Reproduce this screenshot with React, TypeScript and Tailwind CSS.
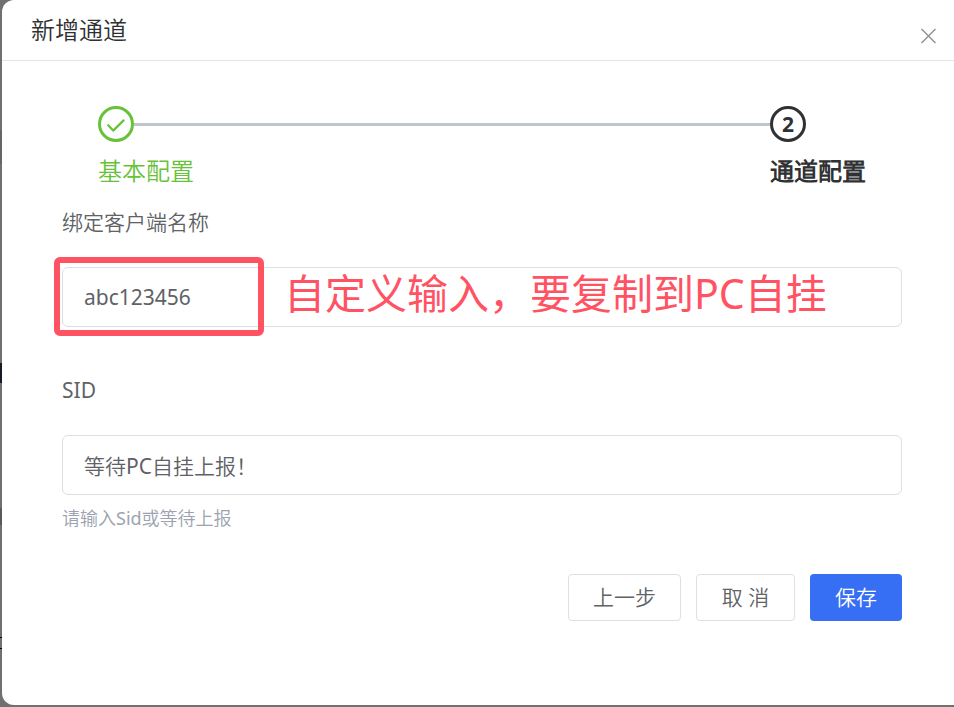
import { useState } from 'react'
import type { ReactNode } from 'react'

interface FieldProps {
  id:        string
  label:     string
  value:     string
  onChange:  (value: string) => void
  hint?:     string
  children?: ReactNode
}

function Field({ id, label, value, onChange, hint, children }: FieldProps) {
  return (
    <div>
      <label htmlFor={id} className="block text-[21px] leading-[30px] text-[#606266]">{label}</label>
      <div className="relative mt-[30px]">
        <input
          id={id}
          type="text"
          value={value}
          onChange={e => onChange(e.target.value)}
          className="block h-[60px] w-full rounded-md border border-[#dcdfe6] bg-white px-[21px] text-[21px] text-[#606266] outline-none focus:border-[#366ef4]"
        />
        {children}
      </div>
      {hint && <p className="mt-[11px] text-[18px] leading-6 text-[#9ca3b0]">{hint}</p>}
    </div>
  )
}

function Steps() {
  return (
    <ol className="flex pt-[45px] pr-[88px] pl-24 text-[24px]">
      <li className="flex-1 text-[#67c23a]">
        <div className="flex items-center">
          <span className="flex size-9 items-center justify-center rounded-full border-3 border-[#67c23a]">
            <svg width="20" height="20" viewBox="0 0 20 20" fill="none" stroke="currentColor" strokeWidth="2.2" strokeLinecap="round" strokeLinejoin="round">
              <path d="M2.2 11.2 7.2 16.6 17.6 6.4" />
            </svg>
          </span>
          <span className="h-[3px] flex-1 bg-[#c0c4cc]" />
        </div>
        <div className="mt-[11px] leading-9">基本配置</div>
      </li>
      <li className="font-bold text-[#303133]" aria-current="step">
        <span className="flex size-9 items-center justify-center rounded-full border-3 border-[#303133] text-[21px] leading-none">2</span>
        <div className="mt-[11px] leading-9">通道配置</div>
      </li>
    </ol>
  )
}

// Sliver of the dimmed page left of the dialog
function Backdrop() {
  return (
    <div className="flex w-[2px] shrink-0 flex-col" aria-hidden="true">
      <div className="h-[130px]" />
      <div className="h-[34px] bg-[#666669]" />
      <div className="h-[199px]" />
      <div className="h-5 bg-[#161b26]" />
      <div className="h-[125px]" />
      <div className="h-[17px] bg-[#58595d]" />
      <div className="h-[112px]" />
      <div className="h-[12px] border-y border-black" />
    </div>
  )
}

export default function App() {
  const [clientName, setClientName] = useState('abc123456')
  const [sid, setSid] = useState('等待PC自挂上报！')

  const plainButton = 'h-[47px] min-w-[99px] rounded border border-[#dcdfe6] bg-white px-6 text-[21px] text-[#606266]'

  return (
    <div className="flex min-h-screen items-start bg-[#707070] pb-[2px] font-['Noto_Sans','Noto_Sans_CJK_SC_DemiLight','Noto_Sans_CJK_SC',sans-serif]">
      <Backdrop />
      <section role="dialog" aria-labelledby="dialog-title" className="min-w-0 flex-1 rounded-l-xl bg-white">
        <header className="flex h-[61px] items-center justify-between border-b border-[#e4e4e4] pr-4 pl-[29px]">
          <h1 id="dialog-title" className="text-[24px] leading-9 text-[#303133]">新增通道</h1>
          <button type="button" aria-label="关闭" className="mt-3 text-[#909399]">
            <svg width="19" height="19" viewBox="0 0 19 19" fill="none" stroke="currentColor" strokeWidth="1.5">
              <path d="M2.5 2 16.5 16M16.5 2 2.5 16" />
            </svg>
          </button>
        </header>

        <Steps />

        <form className="pt-[18px] pr-[52px] pb-[84px] pl-[60px]" onSubmit={e => e.preventDefault()}>
          <div className="flex flex-col gap-12">
            <Field id="client-name" label="绑定客户端名称" value={clientName} onChange={setClientName}>
              <div className="pointer-events-none absolute -top-[10px] -left-2 h-[79px] w-[210px] rounded-md border-6 border-[#ff5364]" />
              <div className="pointer-events-none absolute inset-y-0 left-[222px] flex items-center pb-2 font-['Noto_Sans','Noto_Sans_CJK_SC',sans-serif] text-[41px] leading-none whitespace-nowrap text-[#ff5364]">
                自定义输入，要复制到PC自挂
              </div>
            </Field>
            <Field id="sid" label="SID" value={sid} onChange={setSid} hint="请输入Sid或等待上报" />
          </div>

          <div className="mt-11 flex justify-end gap-[15px]">
            <button type="button" className={plainButton}>上一步</button>
            <button type="button" className={plainButton}>取 消</button>
            <button type="submit" className="h-[47px] rounded bg-[#366ef4] px-[25px] text-[21px] text-white">保存</button>
          </div>
        </form>
      </section>
    </div>
  )
}
